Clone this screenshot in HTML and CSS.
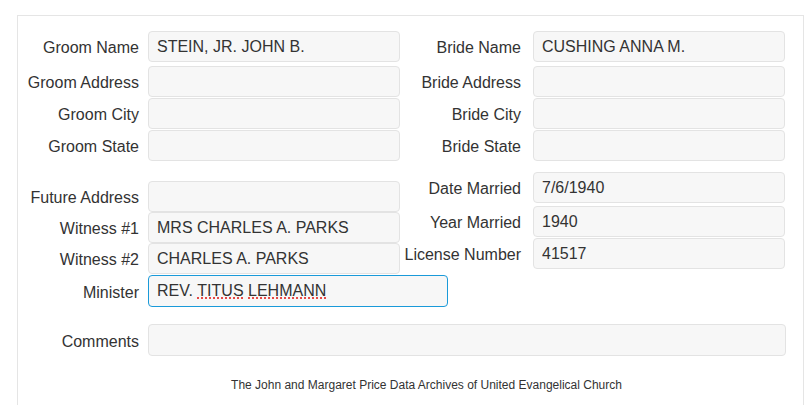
FILE: index.html
```html
<!DOCTYPE html>
<html>
<head>
    <title>Marriage Record</title>
    <link rel="stylesheet" href="styles.css">
</head>
<body>
    <div class="panel">
        <div class="columns">
            <div class="group group-left">
                <div class="row row-first">
                    <label for="groomName">Groom Name</label>
                    <input class="field" type="text" id="groomName" value="STEIN, JR. JOHN B." readonly>
                </div>
                <div class="row">
                    <label for="groomAddress">Groom Address</label>
                    <input class="field" type="text" id="groomAddress" readonly>
                </div>
                <div class="row">
                    <label for="groomCity">Groom City</label>
                    <input class="field" type="text" id="groomCity" readonly>
                </div>
                <div class="row">
                    <label for="groomState">Groom State</label>
                    <input class="field" type="text" id="groomState" readonly>
                </div>
            </div>
            <div class="group group-right">
                <div class="row row-first">
                    <label for="brideName">Bride Name</label>
                    <input class="field" type="text" id="brideName" value="CUSHING ANNA M." readonly>
                </div>
                <div class="row">
                    <label for="brideAddress">Bride Address</label>
                    <input class="field" type="text" id="brideAddress" readonly>
                </div>
                <div class="row">
                    <label for="brideCity">Bride City</label>
                    <input class="field" type="text" id="brideCity" readonly>
                </div>
                <div class="row">
                    <label for="brideState">Bride State</label>
                    <input class="field" type="text" id="brideState" readonly>
                </div>
            </div>
        </div>

        <div class="columns columns-lower">
            <div class="group group-left group-offset">
                <div class="row">
                    <label for="futureAddress">Future Address</label>
                    <input class="field" type="text" id="futureAddress" readonly>
                </div>
                <div class="row">
                    <label for="witness1">Witness #1</label>
                    <input class="field" type="text" id="witness1" value="MRS CHARLES A. PARKS" readonly>
                </div>
                <div class="row">
                    <label for="witness2">Witness #2</label>
                    <input class="field" type="text" id="witness2" value="CHARLES A. PARKS" readonly>
                </div>
                <div class="row row-minister">
                    <label>Minister</label>
                    <div class="field field-focus">REV.&nbsp;<span class="misspelled">TITUS</span>&nbsp;<span class="misspelled">LEHMANN</span></div>
                </div>
            </div>
            <div class="group group-right">
                <div class="row row-date">
                    <label for="dateMarried">Date Married</label>
                    <input class="field" type="text" id="dateMarried" value="7/6/1940" readonly>
                </div>
                <div class="row">
                    <label for="yearMarried">Year Married</label>
                    <input class="field" type="text" id="yearMarried" value="1940" readonly>
                </div>
                <div class="row">
                    <label for="licenseNumber">License Number</label>
                    <input class="field" type="text" id="licenseNumber" value="41517" readonly>
                </div>
            </div>
        </div>

        <div class="row row-wide">
            <label for="comments">Comments</label>
            <input class="field field-tall" type="text" id="comments" readonly>
        </div>

        <p class="footer">The John and Margaret Price Data Archives of United Evangelical Church</p>
    </div>
</body>
</html>
```

FILE: styles.css
```css
body {
    margin: 0;
    font-family: "Liberation Sans", Arial, sans-serif;
    color: #333;
    background-color: #fff;
}

.panel {
    width: 785px;
    margin: 15px 0 0 17px;
    padding: 15px 0 40px;
    border: 1px solid #e5e5e5;
}

.columns {
    display: grid;
    grid-template-columns: 382px 1fr;
    align-items: start;
}

.columns-lower {
    margin-top: 10px;
}

.group-offset {
    padding-top: 9px;
}

.row {
    display: grid;
    grid-template-columns: 121px 252px;
    column-gap: 9px;
    align-items: center;
    margin-bottom: 1px;
}

.group-offset .row {
    margin-bottom: 0;
}

.group-offset .row-minister {
    margin-top: 1px;
    grid-template-columns: 121px 300px;
}

.group-right .row {
    column-gap: 12px;
}

.row-first {
    margin-bottom: 4px;
}

.row-date {
    margin-bottom: 3px;
}

.row label {
    text-align: right;
    font-size: 16px;
    padding-top: 3px;
    white-space: nowrap;
}

.row-wide {
    margin-top: 17px;
    grid-template-columns: 121px 638px;
}

.field {
    box-sizing: border-box;
    height: 31px;
    width: 100%;
    margin: 0;
    padding: 0 8px;
    border: 1px solid #e3e3e3;
    border-radius: 4px;
    background-color: #f7f7f7;
    font-family: "Liberation Sans", Arial, sans-serif;
    font-size: 16px;
    color: #333;
    outline: none;
}

.field-focus {
    display: flex;
    align-items: center;
    height: 32px;
    border-color: #1a9ad9;
}

.field-tall {
    height: 32px;
}

.misspelled {
    text-decoration: underline dotted #e0201c;
    text-underline-offset: 2px;
}

.footer {
    margin: 22px 0 0;
    padding-left: 32px;
    text-align: center;
    font-size: 12px;
}
```
